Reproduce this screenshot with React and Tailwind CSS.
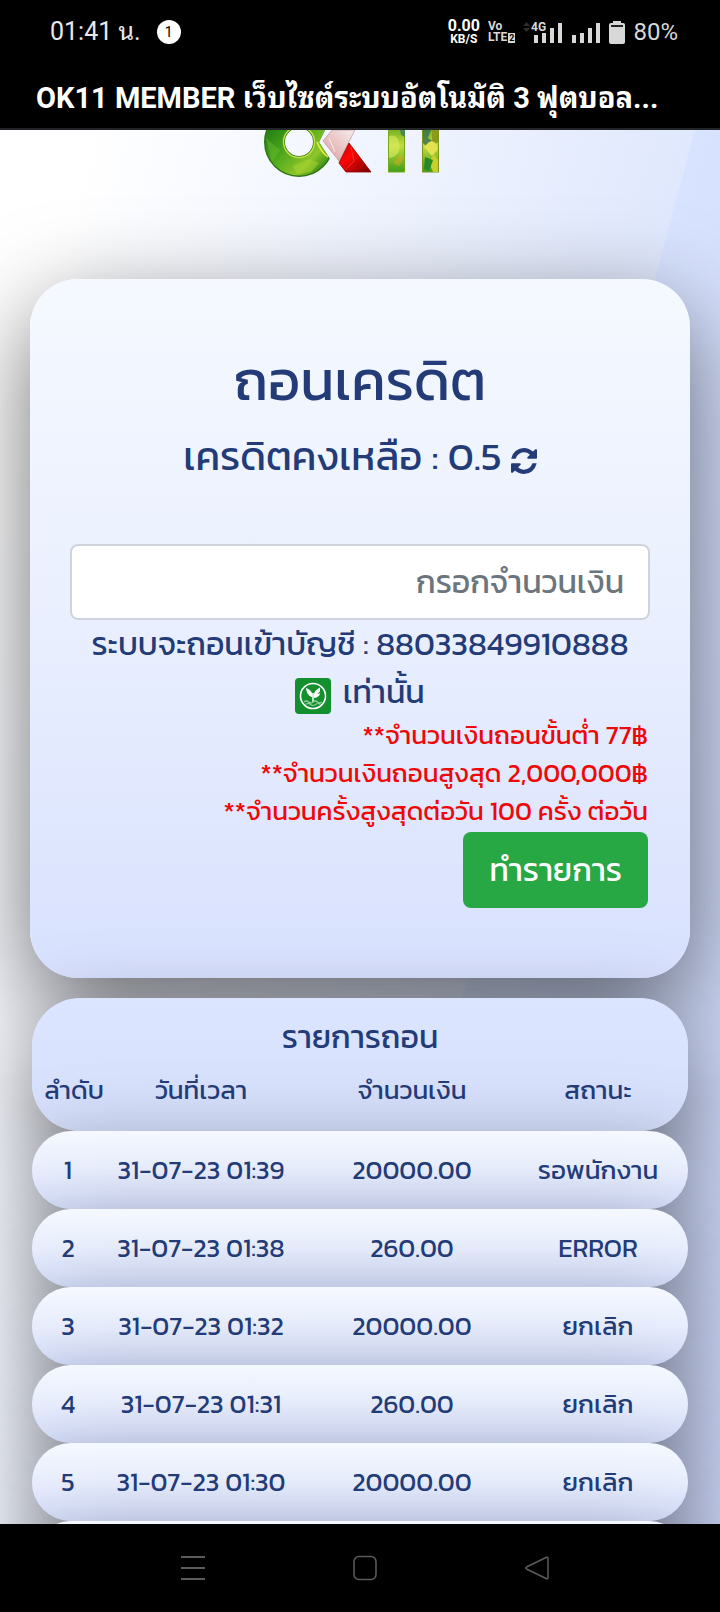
import React, { useState } from 'react';

const rows = [
    { id: 1, date: '31-07-23 01:39', amount: '20000.00', status: 'รอพนักงาน' },
    { id: 2, date: '31-07-23 01:38', amount: '260.00', status: 'ERROR' },
    { id: 3, date: '31-07-23 01:32', amount: '20000.00', status: 'ยกเลิก' },
    { id: 4, date: '31-07-23 01:31', amount: '260.00', status: 'ยกเลิก' },
    { id: 5, date: '31-07-23 01:30', amount: '20000.00', status: 'ยกเลิก' },
];

const App = () => {
    const [amount, setAmount] = useState('');

    return (
        <div className="h-screen flex flex-col overflow-hidden bg-black font-['Kanit','Prompt','Noto_Sans_Thai','Noto_Sans',sans-serif] text-[#233b77]">
            <StatusBar />
            <header className="h-[66px] shrink-0 border-b-2 border-[#222428] px-9 pt-1 flex items-center">
                <h1 className="truncate font-['Roboto','Noto_Sans_Thai_Looped','Noto_Looped_Thai','Sarabun','Garuda','Noto_Sans_Thai',sans-serif] text-[29px] leading-[56px] font-bold text-white">
                    OK11 MEMBER เว็บไซต์ระบบอัตโนมัติ 3 ฟุตบอล...
                </h1>
            </header>

            <main className="flex-1 min-h-0 overflow-hidden bg-[linear-gradient(105deg,#ffffff_8%,#f1f5ff_34%,#e0e8fd_63.5%,#d8e3ff_63.6%,#ccd6f8_100%)]">
                <Logo />
                <WithdrawCard amount={amount} onAmount={setAmount} />
                <History />
            </main>

            <NavBar />
        </div>
    );
};

const StatusBar = () => (
    <div className="h-16 shrink-0 flex items-center justify-between pl-[50px] pr-[42px] font-['Roboto','Noto_Sans_Thai_Looped','Noto_Looped_Thai','Sarabun','Garuda','Noto_Sans_Thai',sans-serif] text-2xl text-[#e8e8e8]">
        <div className="flex items-center gap-4">
            <span className="text-[25px]">01:41 น.</span>
            <span className="size-6 rounded-full bg-white text-black text-sm leading-6 text-center">1</span>
        </div>
        <div className="flex items-center gap-2">
            <div className="text-center font-bold text-white">
                <div className="text-base leading-[14px]">0.00</div>
                <div className="text-xs leading-3">KB/S</div>
            </div>
            <div className="font-bold text-[#d8d8d8] text-xs leading-[11px]">
                <div>Vo</div>
                <div className="flex items-center gap-px">
                    LTE<span className="bg-[#d8d8d8] text-black text-[9px] leading-[10px] px-px">2</span>
                </div>
            </div>
            <svg className="w-10 h-6" viewBox="0 0 40 24" fill="#d8d8d8">
                <path d="M0 6l3.500-4L7 6zM0 8h7l-3.500 4z" fill="#2e2e2e" />
                <text x="8" y="11" fontSize="12" fontWeight="700">4G</text>
                <rect x="11" y="15" width="4" height="8" />
                <rect x="19" y="13" width="4" height="10" />
                <rect x="27" y="8" width="4" height="15" />
                <rect x="35" y="3" width="4" height="20" />
            </svg>
            <svg className="w-[30px] h-6" viewBox="0 0 30 24" fill="#d8d8d8">
                <rect x="1" y="15" width="4" height="8" />
                <rect x="9" y="13" width="4" height="10" />
                <rect x="17" y="8" width="4" height="15" />
                <rect x="25" y="3" width="4" height="20" />
            </svg>
            <svg className="w-4 h-6" viewBox="0 0 16 24">
                <rect x="4" y="1" width="8" height="3" fill="#d8d8d8" />
                <rect x="0" y="3" width="16" height="21" rx="2" fill="#d8d8d8" />
                <rect x="2" y="5" width="12" height="2" fill="#222" />
            </svg>
            <span className="text-[#d8d8d8]">80%</span>
        </div>
    </div>
);

const Logo = () => (
    <svg className="block mx-auto w-[194px] h-[49px] mb-[100px]" viewBox="0 0 194 49" role="img" aria-label="OK11">
        <defs>
            <linearGradient id="ring" x1="0" y1="0" x2="1" y2="1">
                <stop offset="0" stopColor="#1d7a14" />
                <stop offset="0.45" stopColor="#4fa81c" />
                <stop offset="0.8" stopColor="#8fc62a" />
                <stop offset="1" stopColor="#3f8f17" />
            </linearGradient>
            <linearGradient id="arm" x1="0" y1="1" x2="1" y2="0">
                <stop offset="0" stopColor="#dd9c9c" />
                <stop offset="1" stopColor="#f7eeee" />
            </linearGradient>
            <linearGradient id="leg" x1="0" y1="0" x2="1" y2="1">
                <stop offset="0" stopColor="#c80000" />
                <stop offset="0.4" stopColor="#ff0505" />
                <stop offset="1" stopColor="#6d0000" />
            </linearGradient>
            <linearGradient id="bar" x1="0" y1="0" x2="0" y2="1">
                <stop offset="0" stopColor="#6fae1f" />
                <stop offset="0.4" stopColor="#c3dc3c" />
                <stop offset="1" stopColor="#3f9d1d" />
            </linearGradient>
            <clipPath id="ringArea">
                <path d="M0 0h62l-6 12 11 17-6 20H0z" />
            </clipPath>
        </defs>
        <g clipPath="url(#ringArea)">
            <circle cx="36" cy="12" r="24.5" fill="none" stroke="#2d7512" strokeWidth="21" />
            <circle cx="36" cy="12" r="24.5" fill="none" stroke="url(#ring)" strokeWidth="18" />
            <circle cx="36" cy="12" r="15.5" fill="none" stroke="#c4e24a" strokeWidth="1.5" />
            <path d="M30 36l16-7 10 4-8 9-14 2z" fill="#a9d52f" opacity="0.5" />
            <path d="M3 8l14 12-8 12z" fill="#7cc53a" opacity="0.35" />
            <path d="M54 12q4 10 11 15" fill="none" stroke="#e6ee4a" strokeWidth="1.5" />
        </g>
        <path d="M60 11L69 0h23L76 31z" fill="url(#arm)" stroke="#b78c8c" strokeWidth="0.6" />
        <path d="M66 8l6 14" stroke="#fff" strokeWidth="1" opacity="0.7" />
        <path d="M86 13L76 33l7 9h25z" fill="url(#leg)" stroke="#8b0000" strokeWidth="0.8" />
        <path d="M88 17l3 14-8 8" fill="none" stroke="#ff4a3a" strokeWidth="1" opacity="0.6" />
        <rect x="125.500" y="-2" width="16" height="44" fill="url(#bar)" stroke="#74a818" />
        <path d="M126 6q8-2 10 6t-2 12-8 4z" fill="#dcec62" opacity="0.6" />
        <path d="M137 0h5v7l-4-2z" fill="#3b7d5a" opacity="0.8" />
        <path d="M137 24l4 4-5 8-6-3z" fill="#dba91c" opacity="0.5" />
        <rect x="159.500" y="-2" width="16" height="44" fill="url(#bar)" stroke="#7d9418" />
        <path d="M160 0h8l-3 8 6 4-5 7-6-6z" fill="#2e6b54" opacity="0.75" />
        <path d="M169 0h6v12l-6 4z" fill="#8a9a1c" />
        <path d="M161 17q5-6 8-6 5 2 6 8l-6 7z" fill="#e4e250" />
        <path d="M171 24l4 6v12h-5l-4-10z" fill="#c8cf2a" />
        <path d="M162 27l8 3-4 11-5-2z" fill="#258a25" />
    </svg>
);

const WithdrawCard = ({ amount, onAmount }) => (
    <section className="mx-[30px] rounded-[48px] bg-linear-to-b from-[#f5f9ff] via-[#e9effe] to-[#d8e1fe] shadow-[0_32px_96px_rgba(0,0,0,0.56)] px-10 pt-[69px] pb-[70px]">
        <h2 className="text-center text-[56px] leading-[64px]">ถอนเครดิต</h2>
        <p className="mt-5 mb-16 text-center text-[40px] leading-[48px]">
            เครดิตคงเหลือ : 0.5{' '}
            <button type="button" aria-label="รีเฟรช" className="inline-block align-[-4px]">
                <svg className="size-[26px]" viewBox="0 0 1536 1536" fill="currentColor">
                    <path d="M1511 928q0 5-1 7-64 268-268 434.500t-478 166.500q-146 0-282.500-55t-243.500-157l-129 129q-19 19-45 19t-45-19-19-45v-448q0-26 19-45t45-19h448q26 0 45 19t19 45-19 45l-137 137q71 66 161 102t187 36q134 0 250-65t186-179q11-17 53-117 8-23 30-23h192q13 0 22.500 9.500t9.500 22.500zm25-800v448q0 26-19 45t-45 19h-448q-26 0-45-19t-19-45 19-45l138-138q-148-137-349-137-134 0-250 65t-186 179q-11 17-53 117-8 23-30 23h-199q-13 0-22.500-9.500t-9.500-22.500v-7q65-268 270-434.500t480-166.500q146 0 284 55.500t245 156.500l130-129q19-19 45-19t45 19 19 45z" />
                </svg>
            </button>
        </p>

        <form onSubmit={(e) => e.preventDefault()}>
            <input
                type="text"
                inputMode="decimal"
                aria-label="กรอกจำนวนเงิน"
                placeholder="กรอกจำนวนเงิน"
                value={amount}
                onChange={(e) => onAmount(e.target.value)}
                className="block w-full h-[76px] rounded-lg border-2 border-[#ced4da] bg-white px-6 text-right text-[32px] placeholder:text-[#6c757d]"
            />
            <p className="text-center text-[32px] leading-[48px]">
                ระบบจะถอนเข้าบัญชี : 88033849910888
                <br />
                <BankIcon /> เท่านั้น
            </p>
            <div className="text-right text-[26px] leading-[38px] text-[#ee0808] pr-0.5 pb-0.5">
                <p>**จำนวนเงินถอนขั้นต่ำ 77฿</p>
                <p>**จำนวนเงินถอนสูงสุด 2,000,000฿</p>
                <p>**จำนวนครั้งสูงสุดต่อวัน 100 ครั้ง ต่อวัน</p>
            </div>
            <button type="submit" className="block ml-auto mr-0.5 h-[76px] rounded-lg bg-[#28a745] px-[26px] text-[32px] text-white">
                ทำรายการ
            </button>
        </form>
    </section>
);

const BankIcon = () => (
    <svg className="inline-block size-9 mr-1 align-[-11px]" viewBox="0 0 36 36" role="img" aria-label="KBANK">
        <rect width="36" height="36" rx="4" fill="#138f2d" />
        <circle cx="18" cy="18" r="12.500" fill="none" stroke="#fff" strokeWidth="1.600" />
        <path d="M17.300 19.500q-6-2.500-6.300-9.500 5 1.500 6.300 6z" fill="#fff" />
        <path d="M18.700 20v-3.500q1-4.500 6.300-7v4l-3 2.500 3-.8q0 3.800-6.300 4.800z" fill="#fff" />
        <path d="M18 15v9" stroke="#fff" strokeWidth="1.500" />
        <path d="M9 24q2.500-2 4.500 0t4.500 0 4.500 0 4.500 0M10.500 26.500q2.500-2 5 0t5 0 5 0" fill="none" stroke="#8fd09b" strokeWidth="1.200" />
    </svg>
);

const History = () => (
    <table aria-label="รายการถอน" className="block mx-8 mt-5 text-center">
        <thead className="block h-[133px] rounded-[48px] bg-linear-to-b from-[#dbe5ff] to-[#d6e0fc] shadow-[0_36px_88px_rgba(0,0,0,0.54)]">
            <tr className="block pt-[15px]">
                <th colSpan={4} className="block text-[32px] leading-[48px] font-normal">รายการถอน</th>
            </tr>
            <tr className="grid grid-cols-[72fr_194fr_228fr_144fr] pr-[18px] text-[26px] leading-[58px] whitespace-nowrap">
                <th className="font-normal pl-3">ลำดับ</th>
                <th className="font-normal">วันที่เวลา</th>
                <th className="font-normal">จำนวนเงิน</th>
                <th className="font-normal">สถานะ</th>
            </tr>
        </thead>
        <tbody className="block">
            {rows.map((row) => (
                <tr
                    key={row.id}
                    className="grid grid-cols-[72fr_194fr_228fr_144fr] pr-[18px] text-[26px] leading-[78px] whitespace-nowrap rounded-[48px] bg-linear-to-b from-[#f5f8ff] via-[#e9effe] to-[#d8e1fe] shadow-[0_36px_88px_rgba(0,0,0,0.54)]"
                >
                    <td>{row.id}</td>
                    <td>{row.date}</td>
                    <td>{row.amount}</td>
                    <td>{row.status}</td>
                </tr>
            ))}
            {/* next row, still loading */}
            <tr className="block h-[78px] rounded-[48px] bg-linear-to-b from-[#f5f8ff] to-[#d8e1fe] shadow-[0_36px_88px_rgba(0,0,0,0.54)]" />
        </tbody>
    </table>
);

const NavBar = () => (
    <nav className="h-[88px] shrink-0 flex items-center justify-center gap-[146px] pl-[10px] bg-black text-[#5c5c5c]">
        <button type="button" aria-label="Recents">
            <svg className="size-[26px]" viewBox="0 0 26 26" fill="none" stroke="currentColor" strokeWidth="2">
                <path d="M1 2h24M1 13h24M1 24h24" />
            </svg>
        </button>
        <button type="button" aria-label="Home">
            <svg className="size-[26px]" viewBox="0 0 26 26" fill="none" stroke="currentColor" strokeWidth="1.500">
                <rect x="2" y="1.500" width="22" height="23" rx="5" />
            </svg>
        </button>
        <button type="button" aria-label="Back">
            <svg className="size-[26px]" viewBox="0 0 26 26" fill="none" stroke="currentColor" strokeWidth="1.500" strokeLinejoin="round">
                <path d="M22 2.500L2.500 12q-1.500 1 0 2L22 23.500q2 1 2-1V3.500q0-2-2-1z" />
            </svg>
        </button>
    </nav>
);

export default App;
